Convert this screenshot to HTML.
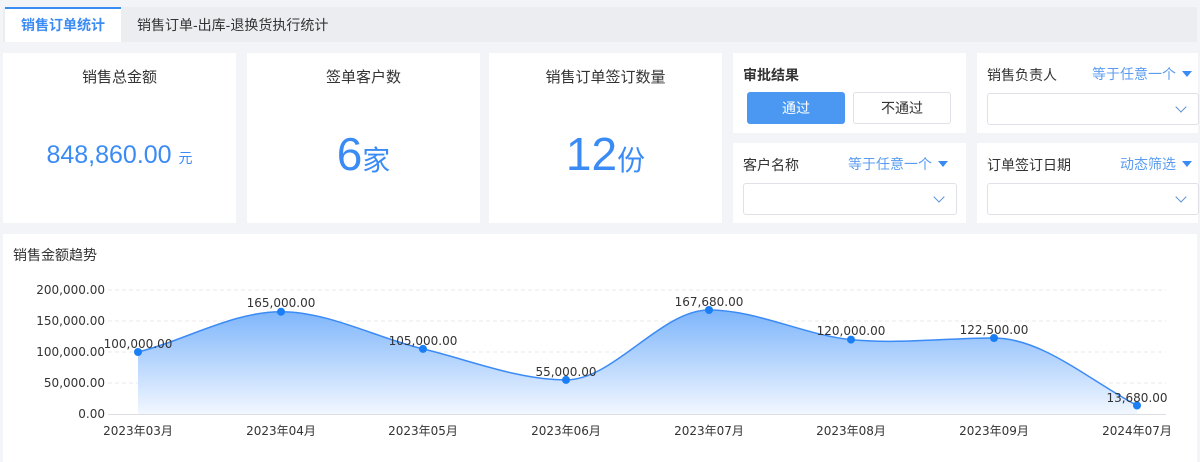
<!DOCTYPE html><html><head><meta charset="utf-8"><style>
*{margin:0;padding:0;box-sizing:border-box}
body{width:1200px;height:462px;background:#f3f4f7;font-family:"Liberation Sans","Noto Sans CJK SC",sans-serif;position:relative;overflow:hidden;color:#333}
.a{position:absolute}
.card{position:absolute;background:#fff}
.tt{position:absolute;left:0;right:0;text-align:center;font-size:15px;color:#333;top:13px}
.blue{color:#3b8bf5}
.sel{position:absolute;border:1px solid #dfe1e6;border-radius:3px;background:#fff;height:32px}
.sel:after{content:"";position:absolute;right:13px;top:9px;width:7px;height:7px;border-right:1.5px solid #5a8fd8;border-bottom:1.5px solid #5a8fd8;transform:rotate(45deg)}
.lab{position:absolute;font-size:14px;color:#333}
.opt{position:absolute;font-size:14px;color:#5b9cf0}
.opt:after{content:"";display:inline-block;margin-left:6px;border-left:5px solid transparent;border-right:5px solid transparent;border-top:6px solid #3b8bf5;vertical-align:2px}
</style></head><body>
<div class="a" style="left:3px;top:7px;width:1194px;height:35px;background:#ebedf1"></div>
<div class="a" style="left:5px;top:7px;width:116px;height:35px;background:#fff;border-top:2px solid #3b8bf5;color:#3b8bf5;font-size:14px;font-weight:bold;text-align:center;line-height:32px">销售订单统计</div>
<div class="a" style="left:137px;top:7px;font-size:14px;line-height:36px;color:#333">销售订单-出库-退换货执行统计</div>

<div class="card" style="left:3px;top:53px;width:233px;height:170px"><div class="tt">销售总金额</div>
<div class="a blue" style="left:0;right:0;top:88px;text-align:center;font-size:25px">848,860.00 <span style="font-size:14px">元</span></div></div>
<div class="card" style="left:247px;top:53px;width:233px;height:170px"><div class="tt">签单客户数</div>
<div class="a blue" style="left:0;right:0;top:74px;text-align:center;font-size:46px">6<span style="font-size:28px">家</span></div></div>
<div class="card" style="left:489px;top:53px;width:233px;height:170px"><div class="tt">销售订单签订数量</div>
<div class="a blue" style="left:0;right:0;top:74px;text-align:center;font-size:46px">12<span style="font-size:28px">份</span></div></div>

<div class="card" style="left:733px;top:53px;width:233px;height:80px">
<div class="lab" style="left:10px;top:12px;font-weight:bold">审批结果</div>
<div class="a" style="left:14px;top:39px;width:98px;height:32px;background:#4a98f1;border-radius:3px;color:#fff;font-size:14px;text-align:center;line-height:32px">通过</div>
<div class="a" style="left:120px;top:39px;width:98px;height:32px;border:1px solid #dfe1e6;border-radius:3px;font-size:14px;text-align:center;line-height:30px">不通过</div></div>
<div class="card" style="left:977px;top:53px;width:221px;height:80px">
<div class="lab" style="left:10px;top:12px">销售负责人</div><div class="opt" style="left:115px;top:11px">等于任意一个</div>
<div class="sel" style="left:10px;top:40px;width:212px"></div></div>
<div class="card" style="left:733px;top:143px;width:233px;height:80px">
<div class="lab" style="left:10px;top:12px">客户名称</div><div class="opt" style="left:115px;top:11px">等于任意一个</div>
<div class="sel" style="left:10px;top:40px;width:214px"></div></div>
<div class="card" style="left:977px;top:143px;width:221px;height:80px">
<div class="lab" style="left:10px;top:12px">订单签订日期</div><div class="opt" style="left:143px;top:11px">动态筛选</div>
<div class="sel" style="left:10px;top:40px;width:212px"></div></div>

<div class="card" style="left:3px;top:234px;width:1194px;height:228px">
<div class="lab" style="left:10px;top:11px;font-size:14px">销售金额趋势</div></div>
<svg class="a" style="left:0;top:0" width="1200" height="462" font-family="DejaVu Sans, Noto Sans CJK SC, sans-serif">
<defs><linearGradient id="g" x1="0" y1="0" x2="0" y2="1"><stop offset="0" stop-color="#7db5fb"/><stop offset="1" stop-color="#f2f7ff"/></linearGradient></defs>
<g stroke="#e8e9ec" stroke-dasharray="4,3"><line x1="108" y1="290" x2="1166" y2="290"/><line x1="108" y1="321" x2="1166" y2="321"/><line x1="108" y1="352" x2="1166" y2="352"/><line x1="108" y1="383" x2="1166" y2="383"/></g>
<path d="M138,352 C186,340 233,311.7 281,311.7 C328.5,311.7 375.5,337.5 423,348.9 C470.5,360.3 518,379.9 566,379.9 C614,379.9 661,310 709,310 C757,310 803.5,334.9 851,339.6 C898.5,344.3 946,338 994,338 C1042,338 1089,380 1137,405.5 L1137,414 L138,414 Z" fill="url(#g)"/>
<path d="M138,352 C186,340 233,311.7 281,311.7 C328.5,311.7 375.5,337.5 423,348.9 C470.5,360.3 518,379.9 566,379.9 C614,379.9 661,310 709,310 C757,310 803.5,334.9 851,339.6 C898.5,344.3 946,338 994,338 C1042,338 1089,380 1137,405.5" fill="none" stroke="#3b8bf5" stroke-width="1.5"/>
<line x1="108" y1="414.5" x2="1166" y2="414.5" stroke="#dcdee3"/>
<g fill="#1a7ef5"><circle cx="138" cy="352" r="4"/><circle cx="281" cy="311.7" r="4"/><circle cx="423" cy="348.9" r="4"/><circle cx="566" cy="379.9" r="4"/><circle cx="709" cy="310" r="4"/><circle cx="851" cy="339.6" r="4"/><circle cx="994" cy="338" r="4"/><circle cx="1137" cy="405.5" r="4"/></g>
<g font-size="12" fill="#333" text-anchor="end"><text x="105" y="294">200,000.00</text><text x="105" y="325">150,000.00</text><text x="105" y="356">100,000.00</text><text x="105" y="387">50,000.00</text><text x="105" y="418">0.00</text></g>
<g font-size="12" fill="#333" text-anchor="middle"><text x="138" y="348">100,000.00</text><text x="281" y="307">165,000.00</text><text x="423" y="345">105,000.00</text><text x="566" y="376">55,000.00</text><text x="709" y="306">167,680.00</text><text x="851" y="335">120,000.00</text><text x="994" y="334">122,500.00</text><text x="1137" y="402">13,680.00</text></g>
<g font-size="12" fill="#333" text-anchor="middle"><text x="138" y="435">2023年03月</text><text x="281" y="435">2023年04月</text><text x="423" y="435">2023年05月</text><text x="566" y="435">2023年06月</text><text x="709" y="435">2023年07月</text><text x="851" y="435">2023年08月</text><text x="994" y="435">2023年09月</text><text x="1137" y="435">2024年07月</text></g>
</svg>
</body></html>
